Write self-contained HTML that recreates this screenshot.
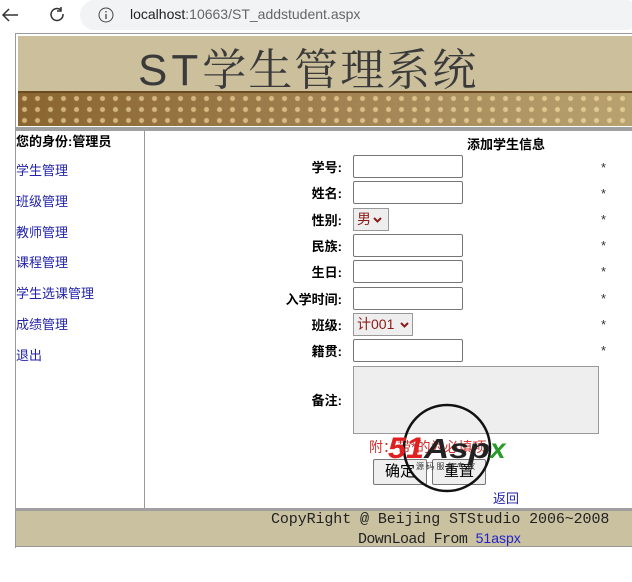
<!DOCTYPE html>
<html><head><meta charset="utf-8"><style>
*{margin:0;padding:0;box-sizing:border-box}
body{width:632px;height:582px;background:#fff;position:relative;overflow:hidden;font-family:"Liberation Sans","Noto Sans CJK SC",sans-serif;font-size:13px;color:#000}
.a{position:absolute}
.lnk{color:#2222aa;font-size:13px}
.lab{position:absolute;right:290px;font-weight:bold;font-size:13px}
.inp{position:absolute;left:353px;width:110px;height:23px;border:1px solid #767676;border-radius:2px;background:#fff}
.star{position:absolute;left:601px;font-size:13px;color:#333}
.sel{position:absolute;left:353px;height:23px;border:1px solid #999;background:#eee;color:#8b1a1a;font-size:14px;padding:2px 3px;line-height:17px;white-space:nowrap;overflow:visible}
.sel svg{vertical-align:middle;margin-left:2px}
.btn{position:absolute;height:26px;border:1px solid #767676;border-radius:2px;background:#efefef;font-size:15px;text-align:center;line-height:24px}
</style></head><body>
<div class="a" style="left:0;top:0;width:632px;height:32px;background:#fff"></div>
<div class="a" style="left:80px;top:0;width:560px;height:30px;background:#f1f3f4;border-radius:15px"></div>
<svg class="a" style="left:0;top:4px" width="80" height="22"><path d="M18 11H3M9 5L3 11l6 6" stroke="#333" stroke-width="1.5" fill="none"/><path d="M61 6a6 6 0 1 0 2 4M61 3v4h-4" stroke="#333" stroke-width="1.5" fill="none"/></svg>
<svg class="a" style="left:97px;top:6px" width="18" height="18"><circle cx="9" cy="9" r="7" stroke="#444" fill="none"/><path d="M9 8v5M9 5v1.5" stroke="#444" stroke-width="1.3"/></svg>
<div class="a" style="left:130px;top:6px;font-size:14px;color:#222">localhost<span style="color:#666">:10663/ST_addstudent.aspx</span></div>
<div class="a" style="left:15px;top:33px;width:620px;height:515px;border-left:1px solid #999;border-top:1px solid #999"></div>
<div class="a" style="left:18px;top:36px;width:614px;height:56px;background:#cbbf9c"></div>
<div class="a" style="left:138px;top:38px;font-size:44px;line-height:56px;color:#3a3a3a;letter-spacing:4px;white-space:nowrap">ST<span style="font-family:'Noto Serif CJK SC',serif;letter-spacing:2px">学生管理系统</span></div>
<div class="a" style="left:18px;top:91px;width:614px;height:2px;background:#6a4a20"></div>
<div class="a" style="left:18px;top:93px;width:614px;height:33px;background:linear-gradient(90deg,#8a6530,#a08050 50%,#b8a270);"></div>
<div class="a" style="left:18px;top:93px;width:614px;height:33px;background-image:radial-gradient(circle,rgba(255,230,170,.6) 2px,transparent 3px);background-size:13px 11px;background-position:0 0"></div>
<div class="a" style="left:16px;top:127px;width:616px;height:4px;background:#a0a0a0"></div>
<div class="a" style="left:16px;top:131px;width:129px;height:378px;border-right:1px solid #999"></div>
<div class="a" style="left:16px;top:131px;font-weight:bold;font-size:13px">您的身份:管理员</div>
<div class="a lnk" style="left:16px;top:160px">学生管理</div>
<div class="a lnk" style="left:16px;top:191px">班级管理</div>
<div class="a lnk" style="left:16px;top:222px">教师管理</div>
<div class="a lnk" style="left:16px;top:252px">课程管理</div>
<div class="a lnk" style="left:16px;top:283px">学生选课管理</div>
<div class="a lnk" style="left:16px;top:314px">成绩管理</div>
<div class="a lnk" style="left:16px;top:345px">退出</div>
<div class="a" style="left:467px;top:134px;font-weight:bold;font-size:13px">添加学生信息</div>
<div class="lab" style="top:157px">学号:</div><div class="inp" style="top:155px"></div><div class="star" style="top:160px">*</div>
<div class="lab" style="top:183px">姓名:</div><div class="inp" style="top:181px"></div><div class="star" style="top:186px">*</div>
<div class="lab" style="top:210px">性别:</div><div class="sel" style="top:208px;width:36px">男<svg width="9" height="6"><path d="M1 1l3.5 3.5L8 1" stroke="#8b1a1a" stroke-width="2" fill="none"/></svg></div><div class="star" style="top:212px">*</div>
<div class="lab" style="top:236px">民族:</div><div class="inp" style="top:234px"></div><div class="star" style="top:238px">*</div>
<div class="lab" style="top:262px">生日:</div><div class="inp" style="top:260px"></div><div class="star" style="top:264px">*</div>
<div class="lab" style="top:289px">入学时间:</div><div class="inp" style="top:287px"></div><div class="star" style="top:291px">*</div>
<div class="lab" style="top:315px">班级:</div><div class="sel" style="top:313px;width:60px">计001 <svg width="9" height="6"><path d="M1 1l3.5 3.5L8 1" stroke="#8b1a1a" stroke-width="2" fill="none"/></svg></div><div class="star" style="top:317px">*</div>
<div class="lab" style="top:341px">籍贯:</div><div class="inp" style="top:339px"></div><div class="star" style="top:343px">*</div>
<div class="lab" style="top:390px">备注:</div>
<div class="a" style="left:353px;top:366px;width:246px;height:68px;border:1px solid #999;background:#eee"></div>
<div class="a" style="left:369px;top:437px;color:#d03030;font-size:14px">附：带*的为必填项</div>
<div class="btn" style="left:373px;top:459px;width:54px">确定</div>
<div class="btn" style="left:432px;top:459px;width:54px">重置</div>
<svg class="a" style="left:386px;top:402px" width="130" height="95"><circle cx="61" cy="46" r="43" stroke="#111" stroke-width="2.5" fill="none"/><text x="2" y="56" font-family="Liberation Sans" font-weight="bold" font-style="italic" font-size="30" fill="#e02020" textLength="36" lengthAdjust="spacingAndGlyphs">51</text><text x="38" y="56" font-family="Liberation Sans" font-weight="bold" font-style="italic" font-size="28" fill="#222" textLength="66" lengthAdjust="spacingAndGlyphs">Asp</text><text x="104" y="56" font-family="Liberation Sans" font-weight="bold" font-style="italic" font-size="28" fill="#2a9a2a">x</text><text x="30" y="67" font-size="8" fill="#333">源 码 服 务 专 家</text></svg>
<div class="a lnk" style="left:493px;top:488px">返回</div>
<div class="a" style="left:16px;top:508px;width:616px;height:3px;background:#a0a0a0"></div>
<div class="a" style="left:16px;top:511px;width:616px;height:36px;background:#c9c1a0;border-bottom:1px solid #999"></div>
<div class="a" style="left:271px;top:511px;font-family:'Liberation Mono',monospace;font-size:15px;color:#222;letter-spacing:-0.1px">CopyRight @ Beijing STStudio 2006~2008</div>
<div class="a" style="left:358px;top:530px;font-family:'Liberation Mono',monospace;font-size:15px;color:#222;letter-spacing:-0.6px">DownLoad From <span style="color:#2222cc;font-family:'Liberation Sans',sans-serif;font-size:14px;letter-spacing:0">51aspx</span></div>
</body></html>
